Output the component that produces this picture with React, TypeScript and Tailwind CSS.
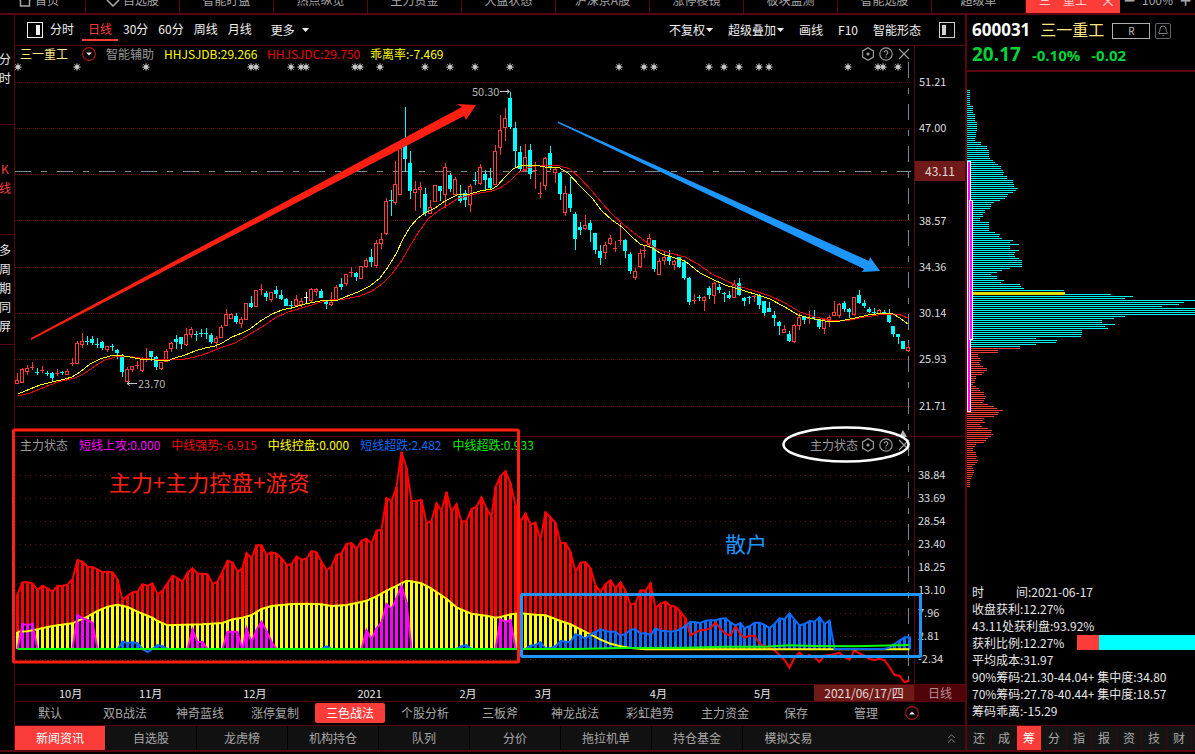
import React, { useState } from 'react';
import { Bell, ChevronsUp } from 'lucide-react';

type Kind = 'u' | 'd' | 'w';
type Candle = [high: number, top: number, bottom: number, low: number, kind: Kind];
type Point = [number, number];

const STEP = 4.98;
const ZERO = 672;

// high, body top, body bottom, low (vertical chart positions), direction
const CANDLES: Candle[] = [
  [373, 380, 383, 383, 'u'], [368, 369, 382, 383, 'u'], [365, 368, 371, 375, 'u'], [362, 367, 368, 370, 'u'],
  [368, 372, 373, 375, 'd'], [366, 370, 371, 373, 'u'], [371, 373, 374, 376, 'd'], [372, 373, 378, 381, 'd'],
  [369, 373, 374, 376, 'u'], [371, 372, 373, 375, 'd'], [369, 371, 374, 374, 'u'], [358, 363, 364, 366, 'u'],
  [341, 343, 363, 363, 'u'], [333, 341, 344, 348, 'u'], [336, 341, 342, 345, 'd'], [336, 339, 343, 345, 'd'],
  [338, 344, 345, 348, 'd'], [341, 342, 348, 350, 'd'], [346, 346, 349, 352, 'u'], [344, 346, 347, 351, 'd'],
  [349, 350, 353, 359, 'd'], [354, 355, 372, 377, 'd'], [367, 369, 381, 382, 'u'], [366, 366, 369, 372, 'u'],
  [361, 365, 366, 369, 'u'], [357, 359, 370, 372, 'u'], [348, 358, 359, 362, 'u'], [351, 351, 357, 361, 'd'],
  [356, 357, 367, 370, 'd'], [362, 362, 368, 370, 'u'], [349, 351, 361, 361, 'u'], [342, 343, 348, 352, 'u'],
  [335, 339, 342, 349, 'd'], [337, 337, 344, 349, 'd'], [328, 334, 344, 346, 'u'], [327, 329, 334, 338, 'u'],
  [331, 334, 335, 341, 'd'], [329, 333, 334, 337, 'd'], [328, 333, 334, 339, 'd'], [333, 335, 342, 344, 'd'],
  [336, 338, 342, 348, 'u'], [325, 327, 337, 337, 'u'], [309, 314, 325, 325, 'u'], [313, 314, 318, 319, 'u'],
  [313, 316, 322, 324, 'd'], [317, 319, 323, 328, 'u'], [303, 303, 319, 319, 'u'], [296, 303, 307, 308, 'd'],
  [290, 290, 306, 307, 'u'], [284, 289, 290, 295, 'u'], [291, 293, 297, 301, 'd'], [292, 292, 299, 302, 'u'],
  [286, 290, 294, 298, 'd'], [290, 295, 299, 300, 'd'], [298, 299, 306, 306, 'd'], [301, 305, 306, 309, 'd'],
  [295, 299, 305, 306, 'u'], [298, 301, 304, 307, 'u'], [292, 297, 298, 304, 'w'], [288, 289, 300, 302, 'u'],
  [288, 289, 291, 296, 'u'], [289, 291, 298, 298, 'd'], [300, 301, 304, 309, 'd'], [292, 302, 304, 306, 'u'],
  [285, 287, 299, 299, 'u'], [278, 284, 287, 290, 'd'], [274, 274, 283, 286, 'u'], [267, 272, 273, 277, 'u'],
  [272, 273, 277, 281, 'd'], [266, 266, 278, 279, 'u'], [258, 260, 266, 268, 'u'], [249, 257, 262, 267, 'd'],
  [240, 243, 265, 268, 'u'], [233, 239, 243, 249, 'u'], [198, 201, 233, 235, 'u'], [190, 200, 201, 216, 'd'],
  [161, 184, 202, 205, 'u'], [147, 148, 194, 194, 'u'], [107, 145, 159, 172, 'd'], [151, 163, 191, 199, 'd'],
  [181, 189, 192, 211, 'u'], [182, 187, 189, 208, 'u'], [188, 194, 213, 216, 'd'], [200, 207, 213, 213, 'u'],
  [185, 185, 201, 201, 'u'], [186, 186, 191, 201, 'd'], [163, 167, 194, 208, 'u'], [173, 175, 189, 192, 'd'],
  [177, 179, 194, 195, 'u'], [185, 196, 201, 203, 'd'], [190, 193, 200, 207, 'd'], [184, 186, 204, 212, 'u'],
  [172, 180, 181, 185, 'd'], [164, 167, 183, 185, 'u'], [170, 174, 180, 191, 'd'], [168, 178, 188, 189, 'd'],
  [145, 151, 184, 184, 'u'], [115, 130, 147, 155, 'u'], [108, 118, 127, 141, 'u'], [92, 98, 127, 129, 'd'],
  [122, 128, 151, 167, 'd'], [146, 152, 169, 171, 'd'], [144, 157, 170, 172, 'u'], [144, 150, 174, 179, 'd'],
  [162, 170, 171, 189, 'u'], [182, 193, 194, 198, 'u'], [157, 158, 185, 190, 'u'], [146, 153, 167, 170, 'd'],
  [168, 169, 172, 183, 'u'], [172, 173, 194, 200, 'd'], [186, 193, 212, 216, 'u'], [177, 194, 208, 212, 'd'],
  [212, 214, 239, 250, 'd'], [222, 227, 230, 235, 'd'], [215, 225, 228, 230, 'u'], [220, 223, 230, 242, 'd'],
  [233, 233, 250, 254, 'd'], [245, 251, 258, 265, 'd'], [242, 245, 252, 259, 'u'], [235, 238, 243, 245, 'u'],
  [241, 248, 249, 252, 'u'], [223, 240, 241, 245, 'u'], [239, 240, 251, 258, 'd'], [252, 254, 271, 274, 'd'],
  [268, 271, 277, 280, 'u'], [249, 253, 266, 268, 'u'], [245, 250, 251, 258, 'u'], [234, 238, 244, 248, 'u'],
  [240, 240, 269, 272, 'd'], [258, 261, 274, 275, 'u'], [252, 257, 260, 265, 'u'], [250, 257, 261, 265, 'd'],
  [260, 261, 264, 270, 'u'], [257, 257, 267, 268, 'd'], [261, 262, 278, 280, 'd'], [277, 278, 302, 305, 'd'],
  [294, 300, 301, 304, 'u'], [295, 297, 298, 301, 'd'], [296, 297, 300, 311, 'u'], [286, 288, 295, 299, 'd'],
  [282, 283, 295, 304, 'u'], [284, 287, 290, 293, 'd'], [292, 293, 294, 302, 'd'], [291, 295, 298, 299, 'd'],
  [280, 284, 297, 297, 'u'], [278, 283, 295, 296, 'd'], [297, 298, 301, 306, 'd'], [296, 297, 298, 304, 'd'],
  [295, 296, 297, 302, 'u'], [294, 295, 305, 309, 'd'], [301, 301, 313, 316, 'd'], [302, 308, 312, 312, 'd'],
  [311, 315, 318, 326, 'd'], [321, 322, 326, 335, 'd'], [325, 329, 332, 333, 'u'], [331, 334, 341, 342, 'd'],
  [324, 325, 341, 343, 'u'], [313, 317, 325, 330, 'u'], [316, 316, 320, 324, 'd'], [311, 318, 319, 324, 'u'],
  [310, 317, 318, 320, 'd'], [319, 319, 327, 329, 'd'], [318, 319, 328, 334, 'u'], [315, 317, 320, 327, 'u'],
  [301, 312, 315, 315, 'u'], [303, 304, 315, 318, 'u'], [301, 303, 309, 312, 'd'], [308, 309, 312, 318, 'd'],
  [297, 297, 314, 316, 'u'], [290, 295, 303, 304, 'd'], [300, 303, 306, 308, 'd'], [307, 309, 312, 313, 'd'],
  [308, 312, 313, 315, 'd'], [309, 310, 313, 313, 'u'], [310, 312, 313, 315, 'd'], [309, 314, 322, 323, 'd'],
  [326, 326, 334, 337, 'd'], [334, 334, 337, 344, 'd'], [341, 341, 349, 349, 'd'], [344, 347, 350, 352, 'u'],
];

const MA_FAST =
  '18,394 30,389 40,385 52,382 65,379 72,377 80,372 90,364 100,359 110,356 118,355 130,357 140,359 155,360 167,361 175,358 185,355 195,351 205,348 215,346 222,343 232,337 242,333 250,329 262,320 272,314 282,310 295,307 305,304 320,301 338,300 345,297 358,292 370,286 380,278 388,267 396,254 403,239 410,227 418,218 425,213 435,208 445,201 457,195 470,194 480,191 492,189 497,186 505,177 513,169 522,165 535,165 545,167 558,167 568,173 580,186 592,198 602,211 612,220 622,227 632,237 640,244 650,247 662,254 675,258 685,261 700,273 712,279 725,285 735,288 745,291 758,295 770,299 785,307 798,315 810,318 825,321 840,321 855,318 868,315 885,313 893,314 900,318 908,324';
const MA_SLOW =
  '18,396 30,393 45,387 58,382 75,378 85,373 95,366 105,360 115,357 125,356 140,358 150,359 170,360 185,359 195,357 205,354 220,348 235,343 250,334 262,327 275,318 288,312 302,308 318,303 330,300 345,299 360,296 372,291 382,284 392,274 402,260 410,246 418,233 428,219 438,211 448,205 457,199 467,196 480,193 492,191 500,188 510,181 518,173 528,168 540,165 560,166 570,169 580,178 592,191 602,203 612,214 624,225 634,233 645,241 657,249 670,253 685,257 698,264 712,274 725,280 738,286 755,291 770,296 785,303 800,312 815,317 830,320 850,320 865,317 885,314 898,314 908,318';

const MARKERS = [
  18, 77, 146, 251, 256, 291, 301, 306, 355, 360, 380, 425, 450, 475, 510, 619, 644, 654, 709, 724, 739, 759, 769, 848,
  878, 883, 898,
];

// Indicator levels, three units to a pixel, one value per candle
const STRONG = [
  508, 472, 472, 475, 495, 482, 490, 500, 482, 483, 479, 463, 405, 410, 425, 426, 433, 442, 440, 442, 463, 525, 512,
  502, 500, 478, 483, 475, 508, 498, 475, 452, 459, 471, 443, 430, 446, 446, 448, 477, 470, 440, 407, 412, 440, 430,
  384, 400, 361, 361, 390, 382, 386, 400, 419, 418, 395, 404, 401, 378, 382, 410, 436, 425, 391, 385, 357, 354, 372,
  347, 341, 356, 317, 314, 219, 229, 186, 80, 130, 228, 227, 225, 295, 287, 235, 258, 200, 262, 237, 291, 288, 252,
  245, 217, 250, 276, 187, 153, 139, 175, 240, 291, 265, 299, 293, 345, 262, 277, 294, 354, 354, 380, 443, 413, 411,
  430, 480, 501, 478, 466, 490, 472, 497, 540, 534, 496, 497, 475, 549, 536, 530, 542, 545, 560, 580, 632, 622, 616,
  614, 611, 592, 612, 626, 632, 603, 628, 638, 632, 632, 655, 665, 667, 675, 690, 705, 728, 698, 683, 695, 690, 696,
  711, 692, 690, 688, 683, 696, 704, 676, 686, 692, 702, 705, 701, 706, 726, 750, 752, 772, 766,
];

const CONTROL: Point[] = [
  [0, 620], [2, 619], [4, 613], [6, 606], [8, 601], [11, 595], [12, 588], [14, 575], [16, 558], [18, 545], [20, 539],
  [22, 546], [24, 560], [26, 572], [27, 578], [28, 588], [30, 601], [33, 599], [37, 598], [41, 594], [43, 583],
  [45, 578], [47, 570], [49, 552], [51, 543], [55, 537], [58, 536], [61, 538], [63, 543], [66, 540], [68, 534],
  [70, 527], [72, 514], [74, 497], [76, 483], [78, 467], [79, 469], [81, 475], [83, 491], [86, 521], [88, 547],
  [91, 566], [94, 572], [96, 578], [97, 576], [99, 568], [101, 565], [104, 569], [106, 571], [109, 588], [111, 598],
  [113, 613], [115, 628], [117, 644], [119, 656], [121, 664], [123, 669], [126, 673], [179, 673],
];

const ATTACK: Point[][] = [
  [[0, 672], [1, 597], [2, 600], [3, 597], [4, 672]],
  [[11, 672], [12, 570], [13, 580], [14, 585], [15, 594], [16, 672]],
  [[34, 672], [35, 613], [36, 652], [37, 650], [38, 672]],
  [[41, 672], [42, 620], [43, 620], [44, 620], [45, 675], [46, 610], [47, 652], [48, 615], [49, 590], [50, 617], [51, 650], [52, 672]],
  [[69, 672], [70, 615], [71, 643], [72, 610], [73, 592], [74, 537], [75, 552], [76, 520], [77, 482], [78, 530], [79, 672]],
  [[96, 672], [97, 583], [98, 590], [99, 585], [100, 672]],
];

const OVERSOLD_TAIL = [
  672, 662, 660, 652, 670, 670, 664, 648, 650, 650, 628, 633, 640, 628, 620, 613, 618, 620, 620, 632, 626, 614, 612,
  626, 624, 630, 610, 617, 618, 620, 618, 612, 602, 590, 592, 594, 587, 586, 586, 581, 580, 592, 602, 594, 610, 604,
  593, 593, 600, 609, 597, 580, 583, 565, 584, 601, 597, 588, 590, 577, 597, 587, 672, 672, 672, 672, 672, 672, 672,
  672, 672, 672, 672, 668, 657, 647, 637, 637,
];

const OVERSOLD: Point[][] = [
  [[20, 672], [21, 650], [22, 654], [23, 652], [24, 654], [25, 672], [26, 681], [27, 672], [28, 660], [29, 664], [30, 672]],
  [[61, 672], [62, 664], [63, 672]],
  [[88, 672], [89, 664], [90, 660], [91, 672]],
  OVERSOLD_TAIL.map((v, i): Point => [i + 102, v]),
];

const MID_OVERSOLD: Point[] = [
  [0, 672], [112, 672], [122, 669], [134, 668], [142, 665], [150, 665], [155, 661], [160, 663], [168, 664], [179, 660],
];

// Chip distribution, one bar every two pixels from the highest price down
const CHIPS = [
  3, 3, 3, 3, 3, 3, 3, 3, 6, 6, 6, 6, 8, 8, 8, 8, 10, 10, 10, 10, 10, 9, 9, 9, 8, 8, 14, 14, 20, 20, 22, 22, 22, 22,
  23, 26, 28, 31, 34, 34, 36, 37, 36, 40, 40, 46, 46, 47, 47, 51, 49, 46, 41, 40, 38, 33, 27, 24, 24, 23, 18, 18, 16,
  16, 13, 13, 22, 22, 22, 22, 22, 28, 33, 32, 35, 46, 43, 52, 43, 43, 52, 48, 47, 48, 52, 55, 55, 55, 55, 43, 35, 30,
  24, 30, 30, 37, 34, 53, 54, 57, 97, 98, 144, 166, 158, 228, 217, 212, 195, 228, 228, 228, 228, 158, 147, 135, 135,
  148, 138, 141, 115, 115, 115, 114, 69, 90, 89, 69, 53,
];
const PROFIT_CHIPS = [
  53, 31, 31, 11, 11, 13, 14, 12, 13, 16, 20, 20, 17, 15, 9, 9, 8, 8, 6, 9, 12, 13, 17, 17, 19, 18, 17, 16, 21, 27, 30,
  36, 32, 31, 27, 17, 16, 18, 13, 15, 21, 25, 24, 26, 24, 21, 19, 17, 9, 8, 6, 6, 9, 9, 10, 9, 11, 10, 8, 5, 6, 7, 7,
  6, 5, 4, 3, 3, 3, 3,
];

const TOP_TABS = ['首页', '自选股', '智能盯盘', '热点纵览', '主力资金', '大盘状态', '沪深京A股', '涨停棱镜', '板块监测', '智能选股', '超级单'];
const PERIODS = ['分时', '日线', '30分', '60分', '周线', '月线'];
const SIDE_TABS = ['分时', 'K线', '多周期同屏'];
// the third slot is left free for the crosshair price
const PRICES = ['51.21', '47.00', '', '38.57', '34.36', '30.14', '25.93', '21.71'];
const LEVELS = ['38.84', '33.69', '28.54', '23.40', '18.25', '13.10', '7.96', '2.81', '-2.34'];
const MONTHS = ['10月', '11月', '12月', '2021', '2月', '3月', '4月', '5月'];
const TEMPLATES = ['默认', '双B战法', '神奇蓝线', '涨停复制', '三色战法', '个股分析', '三板斧', '神龙战法', '彩虹趋势', '主力资金'];
const BOTTOM_TABS = ['新闻资讯', '自选股', '龙虎榜', '机构持仓', '队列', '分价', '拖拉机单', '持仓基金', '模拟交易'];
const RIGHT_TABS = ['还', '成', '筹', '分', '指', '报', '资', '技', '财'];

const barX = (i: number) => Math.round(17 + STEP * i);
const levelX = (i: number) => Math.round(17.4 + STEP * i);
const levelY = (v: number) => 425 + v / 3;
const toPoints = (pts: Point[]) => pts.map(([i, v]) => `${levelX(i) + 0.5},${levelY(v).toFixed(1)}`).join(' ');

const valueAt = (pts: Point[], i: number) => {
  const next = pts.findIndex(([x]) => x >= i);
  if (next <= 0) return pts[0][1];
  const [x0, y0] = pts[next - 1];
  const [x1, y1] = pts[next];
  return y0 + ((y1 - y0) * (i - x0)) / (x1 - x0);
};

const kindColor: Record<Kind, string> = { u: '#ff3c32', d: '#00ffff', w: '#ffffff' };

const CandleMark: React.FC<{ candle: Candle; index: number }> = ({ candle, index }) => {
  const [high, top, bottom, low, kind] = candle;
  const x = barX(index);
  const color = kindColor[kind];
  const hollow = kind === 'u' && bottom - top > 1;
  return (
    <g fill={color}>
      {top > high && <rect x={x} y={high} width={1} height={top - high} />}
      {low > bottom && <rect x={x} y={bottom} width={1} height={low - bottom} />}
      {hollow ? (
        <rect x={x - 1.5} y={top + 0.5} width={3} height={bottom - top} fill="#000" stroke={color} />
      ) : (
        <rect x={x - 2} y={top} width={4} height={Math.max(1, bottom - top)} />
      )}
    </g>
  );
};

const Bars: React.FC<{ points: Point[]; color: string }> = ({ points, color }) => (
  <g fill={color}>
    {points
      .filter(([, v]) => v < ZERO - 3)
      .map(([i, v]) => (
        <rect key={i} x={levelX(i) - 1} y={Math.round(levelY(v))} width={3} height={649 - Math.round(levelY(v))} />
      ))}
  </g>
);

const PriceChart = () => (
  <svg
    viewBox="15 62 899 374"
    preserveAspectRatio="none"
    className="block h-[374px] w-full"
    role="img"
    aria-label="日线K线图"
  >
    <g stroke="#5c0a12" strokeDasharray="1 1" shapeRendering="crispEdges">
      {[82.5, 128.5, 174.5, 220.5, 267.5, 313.5, 359.5, 406.5].map(y => (
        <line key={y} x1={15} x2={910} y1={y} y2={y} />
      ))}
    </g>
    <g stroke="#c4c4c4">
      {MARKERS.map(x => (
        <g key={x}>
          <path d={`M${x} 63v8M${x - 4} 67h8M${x - 3} 64l6 6M${x + 3} 64l-6 6`} strokeWidth={0.7} />
          <circle cx={x} cy={67} r={2} fill="#c4c4c4" />
        </g>
      ))}
    </g>
    <g stroke="#7d8796" strokeDasharray="16 10 6 10" shapeRendering="crispEdges">
      <line x1={15} x2={911} y1={171.5} y2={171.5} />
      <line x1={908.5} x2={908.5} y1={62} y2={436} />
    </g>
    <g shapeRendering="crispEdges">
      {CANDLES.map((c, i) => (
        <CandleMark key={i} candle={c} index={i} />
      ))}
    </g>
    <g fill="none" shapeRendering="crispEdges">
      <polyline points={MA_SLOW} stroke="#f00000" />
      <polyline points={MA_FAST} stroke="#ffff00" />
    </g>
    <g fill="#b4b4b4" fontSize={11}>
      <text x={472} y={96}>50.30</text>
      <text x={138} y={388}>23.70</text>
    </g>
    <path d="M500 91.5h9M507 89.5l2.500 2-2.500 2M127 383.500h10M129.500 381.500l-2.500 2 2.500 2" fill="none" stroke="#c8c8c8" />
  </svg>
);

const StatusChart = () => {
  const control = CANDLES.map((_, i): Point => [i, valueAt(CONTROL, i)]);
  const strong = STRONG.map((v, i): Point => [i, v]);
  return (
    <svg
      viewBox="15 453 899 231"
      preserveAspectRatio="none"
      className="block h-[231px] w-full overflow-visible"
      role="img"
      aria-label="主力状态"
    >
      <g stroke="#6b0d16" strokeDasharray="1 4" shapeRendering="crispEdges">
        {LEVELS.map((level, i) => (
          <line key={level} x1={15} x2={912} y1={475.5 + i * 23} y2={475.5 + i * 23} />
        ))}
      </g>
      <line x1={908.5} x2={908.5} y1={440} y2={684} stroke="#7d8796" strokeDasharray="16 10 6 10" />
      <g shapeRendering="crispEdges">
        <Bars points={strong.slice(0, 135)} color="#ff0000" />
        <Bars points={control.slice(0, 124)} color="#ffff00" />
        {ATTACK.map((run, n) => (
          <Bars key={n} points={run} color="#ff00ff" />
        ))}
        {OVERSOLD.map((run, n) => (
          <Bars key={n} points={run} color="#0a6cff" />
        ))}
      </g>
      <g fill="none" strokeWidth={2}>
        <polyline points={toPoints(strong)} stroke="#ff0000" />
        <polyline points={toPoints(CONTROL)} stroke="#ffff00" />
        {ATTACK.map((run, n) => (
          <polyline key={n} points={toPoints(run)} stroke="#ff00ff" />
        ))}
        {OVERSOLD.map((run, n) => (
          <polyline key={n} points={toPoints(run)} stroke="#0a6cff" />
        ))}
        <polyline points={toPoints(MID_OVERSOLD)} stroke="#00ff00" />
      </g>
      <path d="M899 437l4-7 4 7z" fill="#b4b4b4" />
    </svg>
  );
};

const Annotations = () => (
  <svg
    viewBox="15 46 950 638"
    preserveAspectRatio="none"
    className="pointer-events-none absolute inset-0 h-full w-full overflow-visible"
    aria-hidden="true"
  >
    <path d="M31 338L462 107L457 104L476 105L466 120L464 116L31 340Z" fill="#ff2012" />
    <path d="M558 121.500L869 261L870 257L880 271L862 272L864 269L558 123Z" fill="#1e96ff" />
    <g fill="none" strokeWidth={3}>
      <rect x={13.5} y={430} width={505} height={232} rx={1} stroke="#ff2012" />
      <rect x={521.5} y={594.5} width={399} height={62} rx={1} stroke="#1e96ff" />
      <ellipse cx={846} cy={444.5} rx={62.500} ry={17} stroke="#fff" strokeWidth={2.500} />
    </g>
    <text x={109} y={491} fontSize={22} fill="#ff2012">
      主力+主力控盘+游资
    </text>
    <text x={725} y={552} fontSize={21} fill="#1e96ff">
      散户
    </text>
  </svg>
);

const PanelTools = () => (
  <div className="flex items-center gap-1 text-[#9a9a9a]">
    <button aria-label="设置">
      <svg viewBox="0 0 14 14" className="block size-3.5" fill="none" stroke="currentColor" strokeWidth={1.2}>
        <path d="M7 .8l5.400 3.100v6.200L7 13.200l-5.400-3.100V3.900z" />
        <circle cx={7} cy={7} r={1} fill="currentColor" />
      </svg>
    </button>
    <button aria-label="帮助">
      <svg viewBox="0 0 14 14" className="block size-3.5" fill="none" stroke="currentColor" strokeWidth={1.2}>
        <circle cx={7} cy={7} r={6.200} />
        <path d="M5.200 5.500c0-2.500 3.700-2.300 3.600-.1C8.800 6.900 7 6.800 7 8.500M7 9.600v1.200" />
      </svg>
    </button>
    <button aria-label="关闭">
      <svg viewBox="0 0 14 14" className="block size-3.5" stroke="currentColor" strokeWidth={1.2}>
        <path d="M2 2l10 10M12 2L2 12" />
      </svg>
    </button>
  </div>
);

const CaretDown = () => (
  <svg viewBox="0 0 7 4" className="h-1 w-[7px]" fill="currentColor">
    <path d="M0 0h7L3.500 4z" />
  </svg>
);

const RoundArrow: React.FC<{ up?: boolean }> = ({ up }) => (
  <svg viewBox="0 0 14 14" className="block size-3.5">
    <circle cx={7} cy={7} r={6.400} fill="none" stroke="#b01818" strokeWidth={1.1} />
    <path d={up ? 'M4 8.500h6l-3-3z' : 'M4 5.500h6l-3 3z'} fill="#e6e6e6" />
  </svg>
);

const SplitIcon = () => (
  <svg viewBox="0 0 16 16" className="block size-4">
    <rect x={0.5} y={0.5} width={15} height={15} fill="none" stroke="#f0f0f0" />
    <rect x={9} y={3} width={4} height={10} fill="#f0f0f0" />
  </svg>
);

const SplitLeftIcon = () => (
  <svg viewBox="0 0 16 16" className="block size-4">
    <rect x={0.5} y={0.5} width={15} height={15} fill="none" stroke="#d0d0d0" />
    <rect x={3} y={3} width={4} height={10} fill="#d0d0d0" />
  </svg>
);

const ChipDistribution = () => (
  <svg
    viewBox="967 72 228 510"
    preserveAspectRatio="none"
    className="block h-[510px] w-full"
    shapeRendering="crispEdges"
    role="img"
    aria-label="筹码分布"
  >
    {CHIPS.map((w, i) => (
      <rect key={i} x={967} y={90 + i * 2} width={w} height={1} fill="#00f0f0" />
    ))}
    {PROFIT_CHIPS.map((w, i) => (
      <rect key={i} x={967} y={348 + i * 2} width={w} height={1} fill="#f03c32" />
    ))}
    <rect x={967} y={292} width={98} height={3} fill="#e0e000" />
    <rect x={967.5} y={161.5} width={3} height={250} fill="#ff00ff" stroke="#fff" />
    <rect x={969.5} y={200.5} width={3} height={139} fill="#ff00ff" stroke="#fff" />
  </svg>
);

const Header = () => (
  <header className="flex h-[15px] items-end overflow-hidden border-b-2 border-[#5a0610] text-[#a8a8a8]">
    <nav className="flex h-[26px] min-w-0">
      {TOP_TABS.map((tab, i) => (
        <button
          key={tab}
          className={`flex items-center justify-center gap-[3px] border-r border-[#5a0610] ${i === 0 ? 'w-[86px] pr-2' : 'w-[94px]'}`}
        >
          {i === 0 && (
            <svg viewBox="0 0 14 14" className="size-3.5" fill="none" stroke="currentColor" strokeWidth={1.5}>
              <path d="M1 7l6-6 6 6M2.500 6v7h9V6" />
            </svg>
          )}
          {i === 1 && (
            <svg viewBox="0 0 14 14" className="size-3.5" fill="none" stroke="currentColor" strokeWidth={1.5}>
              <path d="M7 13L1.500 7.500C-.5 4 4 0 7 4c3-4 7.500 0 5.500 3.500z" />
            </svg>
          )}
          {tab}
        </button>
      ))}
      <button className="flex w-[94px] items-center justify-end gap-[13px] bg-[#fc3c38] pr-1 text-[#ffd0cc]">
        三一重工
        <span className="text-base">×</span>
      </button>
    </nav>
    <div className="flex h-[26px] flex-1 items-center justify-between px-1">
      <button aria-label="缩小" className="text-xl">−</button>
      <span>100%</span>
      <button aria-label="放大" className="text-xl">+</button>
    </div>
  </header>
);

const SideBar = () => (
  <nav className="w-[15px] shrink-0 border-r border-[#5a0610]">
    {SIDE_TABS.map(tab => (
      <button
        key={tab}
        className={`flex h-[110px] w-full flex-col items-center justify-center border-b border-[#5a0610] pr-1 pb-1 leading-[19px] ${tab === 'K线' ? 'text-[#fc3c38]' : 'text-[#e8e8e8]'}`}
      >
        {tab.split('').map(char => (
          <span key={char}>{char}</span>
        ))}
      </button>
    ))}
  </nav>
);

const Toolbar: React.FC<{ period: string; onPeriod: (p: string) => void }> = ({ period, onPeriod }) => (
  <div className="flex h-[31px] items-center justify-between border-b border-[#5a0610] pr-2.5 pl-3 text-[#f0f0f0]">
    <div className="flex items-center">
      <button aria-label="左侧栏" className="mr-0.5">
        <SplitIcon />
      </button>
      {PERIODS.map(p => (
        <button
          key={p}
          onClick={() => onPeriod(p)}
          className={`h-[22px] border-b-2 ${p === period ? 'ml-[3px] border-[#fc3c38] px-1.5 text-[#fc3c38]' : 'border-transparent px-[5px]'}`}
        >
          {p}
        </button>
      ))}
      <button className="ml-3.5 flex items-center gap-[7px]">
        更多
        <CaretDown />
      </button>
    </div>
    <div className="flex items-center gap-[15px]">
      <button className="flex items-center gap-px">
        不复权
        <CaretDown />
      </button>
      <button className="flex items-center gap-px">
        超级叠加
        <CaretDown />
      </button>
      <button>画线</button>
      <button>F10</button>
      <button>智能形态</button>
      <button aria-label="右侧栏" className="ml-[3px]">
        <SplitLeftIcon />
      </button>
    </div>
  </div>
);

const QuotePanel = () => {
  const [tab, setTab] = useState('筹');
  return (
    <aside className="flex w-[230px] shrink-0 flex-col border-l-2 border-[#5a0610]">
      <div className="h-[57px] border-b-2 border-[#5a0610] pt-1 pl-[5px]">
        <div className="flex h-[23px] items-center">
          <span className="font-['Open_Sans'] text-[17px] font-bold text-white">600031</span>
          <h1 className="ml-2.5 pb-1 text-base text-[#ffe680]">三一重工</h1>
          <button className="ml-2 h-4 w-[38px] border border-[#b0b0b0] text-[10px] leading-3 text-[#c0c0c0]">R</button>
          <button
            aria-label="预警"
            className="ml-[5px] flex size-4 items-center justify-center rounded-xs border border-[#60666e] text-[#7c828a]"
          >
            <Bell size={12} strokeWidth={2} />
          </button>
        </div>
        <div className="flex h-[26px] items-center gap-[11px] font-['Open_Sans'] text-[15px] font-bold text-[#00d23c]">
          <span className="text-[19px]">20.17</span>
          <span>-0.10%</span>
          <span>-0.02</span>
        </div>
      </div>
      <ChipDistribution />
      <div className="mt-px flex-1 pl-[5px] leading-[17px] whitespace-nowrap text-[#e6e6e6]">
        <p>
          时<span className="inline-block w-8" />间:2021-06-17
        </p>
        <p>收盘获利:12.27%</p>
        <p>43.11处获利盘:93.92%</p>
        <div className="flex items-center">
          <p className="w-[105px]">获利比例:12.27%</p>
          <span className="flex h-[15px] flex-1 bg-[#00ffff]">
            <span className="w-[22px] bg-[#fc3c38]" />
          </span>
        </div>
        <p>平均成本:31.97</p>
        <p>90%筹码:21.30-44.04+ 集中度:34.80</p>
        <p>70%筹码:27.78-40.44+ 集中度:18.57</p>
        <p>筹码乖离:-15.29</p>
      </div>
      <nav className="flex h-[25px] border-t border-[#5a0610] bg-[#141414]">
        {RIGHT_TABS.map(t => (
          <button
            key={t}
            onClick={() => setTab(t)}
            className={`w-[25px] border-r border-[#3c0810] ${t === tab ? 'bg-[#fc3c38] text-white' : 'text-[#a8a8a8]'}`}
          >
            {t}
          </button>
        ))}
      </nav>
    </aside>
  );
};

export default function App() {
  const [period, setPeriod] = useState('日线');
  const [template, setTemplate] = useState('三色战法');
  const [bottomTab, setBottomTab] = useState('新闻资讯');

  return (
    <div className="min-h-screen overflow-hidden bg-black font-['Noto_Sans_CJK_SC',sans-serif] text-xs whitespace-nowrap">
      <Header />
      <div className="flex border-b-2 border-[#5a0610]">
        <SideBar />
        <main className="flex min-w-0 flex-1 flex-col">
          <Toolbar period={period} onPeriod={setPeriod} />

          <div className="relative">
            <section className="flex">
              <div className="min-w-0 flex-1">
                <div className="flex h-4 items-center justify-between pr-[3px] pl-[5px]">
                  <div className="flex items-center">
                    <span className="text-[#ffe680]">三一重工</span>
                    <button aria-label="切换指标" className="mr-2.5 ml-3.5">
                      <RoundArrow />
                    </button>
                    <span className="text-[#9a9a9a]">智能辅助</span>
                    <span className="ml-2.5 w-[93px] text-[#ffff00]">HHJSJDB:29.266</span>
                    <span className="ml-2.5 w-[93px] text-[#f00000]">HHJSJDC:29.750</span>
                    <span className="ml-2.5 text-[#ffff00]">乖离率:-7.469</span>
                  </div>
                  <PanelTools />
                </div>
                <PriceChart />
              </div>
              <div className="relative flex w-[51px] flex-col border-l border-[#5a0610] pt-3 pb-2 text-[11px] text-[#dcdcdc]">
                {PRICES.map((price, i) => (
                  <span key={i} className="flex flex-1 items-center pl-1">
                    {price}
                  </span>
                ))}
                <span className="absolute inset-x-0 top-[115px] h-5 bg-[#701a18] text-center text-xs leading-5 text-[#e0d8d8]">
                  43.11
                </span>
              </div>
            </section>

            <section className="flex border-t border-[#5a0610]">
              <div className="min-w-0 flex-1">
                <div className="flex h-4 items-center justify-between pr-[3px] pl-[5px]">
                  <div className="flex items-center gap-[11px]">
                    <span className="text-[#9a9a9a]">主力状态</span>
                    <span className="text-[#ff00ff]">短线上攻:0.000</span>
                    <span className="text-[#f00000]">中线强势:-6.915</span>
                    <span className="text-[#ffff00]">中线控盘:0.000</span>
                    <span className="text-[#0a6cff]">短线超跌:2.482</span>
                    <span className="text-[#00f000]">中线超跌:0.933</span>
                  </div>
                  <div className="flex items-center gap-[3px] text-[#9a9a9a]">
                    <span>主力状态</span>
                    <PanelTools />
                  </div>
                </div>
                <StatusChart />
              </div>
              <div className="flex w-[51px] flex-col border-l border-[#5a0610] pt-[26px] pb-3.5 text-[11px] text-[#dcdcdc]">
                {LEVELS.map(level => (
                  <span key={level} className="flex flex-1 items-center pl-[3px]">
                    {level}
                  </span>
                ))}
              </div>
            </section>
            <Annotations />
          </div>

          <div className="flex h-[17px] border-t border-[#5a0610] leading-4">
            <div className="grid flex-1 grid-cols-[80fr_104fr_114fr_102fr_75fr_115fr_104fr_60fr] pl-11 text-[11px] text-[#e6e6e6]">
              {MONTHS.map(month => (
                <span key={month}>{month}</span>
              ))}
            </div>
            <span className="w-[100px] bg-[#701a18] text-center text-[#e6dcdc]">2021/06/17/四</span>
            <span className="w-[51px] border-l border-[#5a0610] bg-[#50040a] text-center text-[#b09090]">日线</span>
          </div>

          <div className="flex h-6 items-center gap-[5px] border-t border-[#5a0610] pb-px text-[#a8a8a8]">
            {TEMPLATES.map(t => (
              <button
                key={t}
                onClick={() => setTemplate(t)}
                className={`h-5 w-[70px] rounded-xs ${t === template ? 'bg-[#fc3c38] text-white' : ''}`}
              >
                {t}
              </button>
            ))}
            <button className="h-5 w-[62px]">保存</button>
            <button className="h-5 w-[68px]">管理</button>
            <button aria-label="收起">
              <RoundArrow up />
            </button>
          </div>

          <nav className="flex h-[25px] border-t border-[#5a0610] bg-[#111111] text-[#a8a8a8]">
            {BOTTOM_TABS.map(t => (
              <button
                key={t}
                onClick={() => setBottomTab(t)}
                className={`w-[91px] border-r border-black ${t === bottomTab ? 'bg-[#fc3c38] text-white' : ''} last-of-type:border-r-0`}
              >
                {t}
              </button>
            ))}
            <span className="ml-auto flex items-center pr-1.5">
              <ChevronsUp size={15} strokeWidth={1.25} />
            </span>
          </nav>
        </main>
        <QuotePanel />
      </div>
    </div>
  );
}
